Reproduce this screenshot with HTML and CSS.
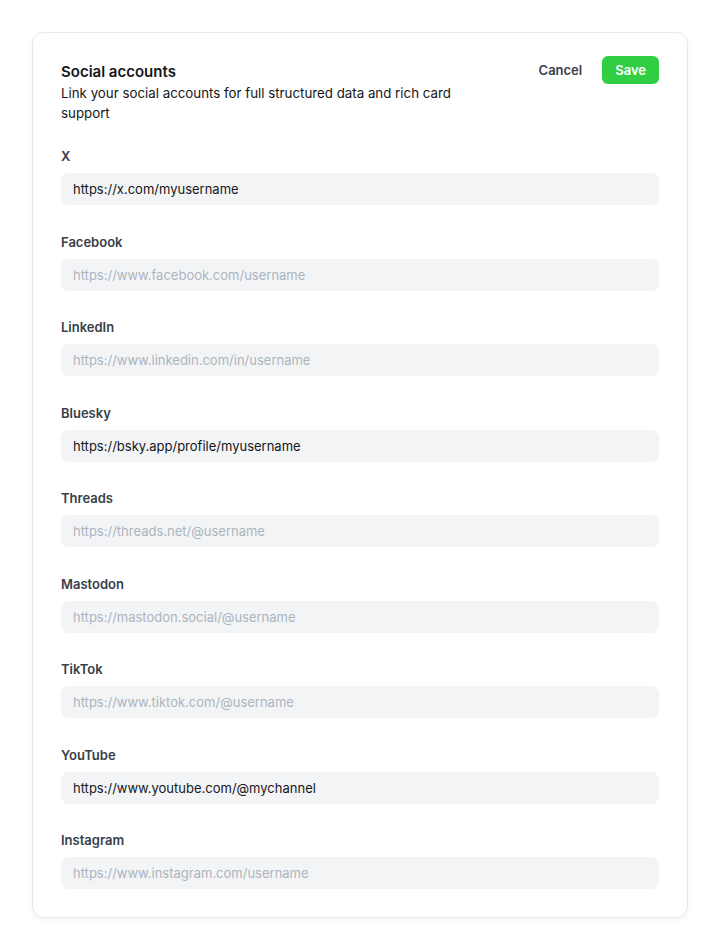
FILE: index.html
```html
<!DOCTYPE html>
<html lang="en">

<head>
    <meta charset="UTF-8" />
    <meta name="viewport" content="width=device-width, initial-scale=1.0" />
    <title>Social accounts</title>
    <link rel="stylesheet" href="styles.css">
</head>

<body>
    <div class="card">
        <div class="card-head">
            <div class="intro">
                <h2>Social accounts</h2>
                <p>Link your social accounts for full structured data and rich card support</p>
            </div>
            <div class="actions">
                <button class="btn-cancel">Cancel</button>
                <button class="btn-save">Save</button>
            </div>
        </div>

        <div class="fields">
            <div class="field">
                <label for="x">X</label>
                <input id="x" type="text" value="https://x.com/myusername" placeholder="https://x.com/username">
            </div>
            <div class="field">
                <label for="facebook">Facebook</label>
                <input id="facebook" type="text" placeholder="https://www.facebook.com/username">
            </div>
            <div class="field">
                <label for="linkedin">LinkedIn</label>
                <input id="linkedin" type="text" placeholder="https://www.linkedin.com/in/username">
            </div>
            <div class="field">
                <label for="bluesky">Bluesky</label>
                <input id="bluesky" type="text" value="https://bsky.app/profile/myusername" placeholder="https://bsky.app/profile/username">
            </div>
            <div class="field">
                <label for="threads">Threads</label>
                <input id="threads" type="text" placeholder="https://threads.net/@username">
            </div>
            <div class="field">
                <label for="mastodon">Mastodon</label>
                <input id="mastodon" type="text" placeholder="https://mastodon.social/@username">
            </div>
            <div class="field">
                <label for="tiktok">TikTok</label>
                <input id="tiktok" type="text" placeholder="https://www.tiktok.com/@username">
            </div>
            <div class="field">
                <label for="youtube">YouTube</label>
                <input id="youtube" type="text" value="https://www.youtube.com/@mychannel" placeholder="https://www.youtube.com/@channel">
            </div>
            <div class="field">
                <label for="instagram">Instagram</label>
                <input id="instagram" type="text" placeholder="https://www.instagram.com/username">
            </div>
        </div>
    </div>
</body>

</html>
```

FILE: styles.css
```css
:root{
    --text: #15171a;
    --label: #394047;
    --muted: #abb4be;
    --field-bg: #f3f4f6;
    --border: #e6e8eb;
    --green: #30cf43;
}

body{
    margin: 0;
    padding: 32px;
    font-family: Inter, "Noto Sans", sans-serif;
    color: var(--text);
    background-color: #fff;
}
.card{
    border: 1px solid var(--border);
    border-radius: 12px;
    padding: 28px 28px 28px;
    box-shadow: 0 2px 6px rgba(0, 0, 0, 0.05);
}
.card-head{
    display: flex;
    justify-content: space-between;
    align-items: flex-start;
}
.intro{
    max-width: 400px;
}
.intro h2{
    margin: 0;
    font-size: 15px;
    line-height: 22px;
    font-weight: 600;
}
.intro p{
    margin: 0;
    font-size: 13.3px;
    line-height: 20px;
}
.actions{
    display: flex;
    align-items: center;
    gap: 20px;
    margin-top: -5px;
}
.actions button{
    font-family: inherit;
    font-size: 13px;
    font-weight: 600;
    border: none;
    cursor: pointer;
}
.btn-cancel{
    background: none;
    color: var(--label);
    padding: 0;
}
.btn-save{
    background-color: var(--green);
    color: #fff;
    height: 28px;
    padding: 0 13px;
    border-radius: 6px;
}
.fields{
    display: flex;
    flex-direction: column;
    gap: 26.5px;
    margin-top: 23px;
}
.field label{
    display: block;
    font-size: 13px;
    line-height: 20px;
    font-weight: 600;
    color: var(--label);
    margin-bottom: 7px;
}
.field input{
    display: block;
    box-sizing: border-box;
    width: 100%;
    height: 32px;
    padding: 0 12px;
    border: none;
    border-radius: 8px;
    background-color: var(--field-bg);
    font-family: inherit;
    font-size: 13px;
    color: var(--text);
    outline: none;
}
.field input::placeholder{
    color: var(--muted);
}
```
